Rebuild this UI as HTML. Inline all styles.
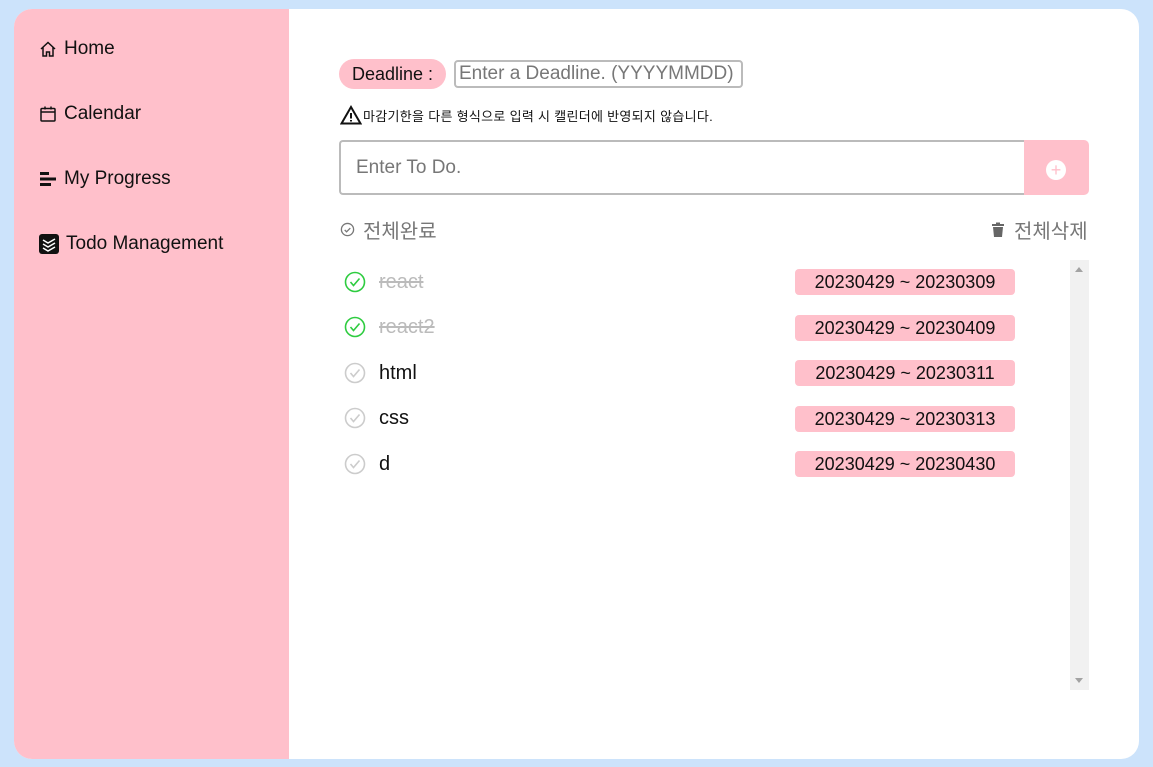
<!DOCTYPE html>
<html><head><meta charset="utf-8"><style>
*{margin:0;padding:0;box-sizing:border-box}
body{width:1153px;height:767px;background:#cce3fb;font-family:"Liberation Sans","Noto Sans CJK KR",sans-serif;position:relative;overflow:hidden}
.card{position:absolute;left:14px;top:9px;width:1125px;height:750px;background:#fff;border-radius:18px;overflow:hidden}
.side{position:absolute;left:0;top:0;width:275px;height:750px;background:#ffc0cb}
.nav{position:absolute;left:25px;font-size:19px;color:#111;display:flex;align-items:center;gap:7px}
.abs{position:absolute}
.row{position:absolute;left:344px;height:30px;display:flex;align-items:center}
.row .t{font-size:20px;margin-left:13px}
.date{position:absolute;left:781px;width:220px;height:26px;background:#ffc0cb;border-radius:4px;font-size:18px;text-align:center;line-height:26px;color:#111}
</style></head><body>
<div class="card">
<div class="side">
<div class="nav" style="top:29px"><svg width="18" height="18" viewBox="0 0 18 18" fill="none" stroke="#111" stroke-width="1.5"><path d="M2 9L9 2.5 16 9M4 7.5V16h3.5v-4h3v4H14V7.5"/></svg>Home</div>
<div class="nav" style="top:94px"><svg width="18" height="18" viewBox="0 0 18 18" fill="none" stroke="#111" stroke-width="1.5"><rect x="2" y="3.5" width="14" height="12.5" rx="1"/><path d="M2 7h14M6 1.5v3M12 1.5v3"/></svg>Calendar</div>
<div class="nav" style="top:159px"><svg width="18" height="18" viewBox="0 0 18 18" fill="#111"><rect x="1" y="2" width="9" height="3"/><rect x="1" y="7.5" width="16" height="3"/><rect x="1" y="13" width="11" height="3"/></svg>My Progress</div>
<div class="nav" style="top:224px"><svg width="20" height="20" viewBox="0 0 20 20"><rect x="0" y="0" width="20" height="20" rx="3" fill="#111"/><path d="M4 6l5 3 7-4M4 10l5 3 7-4M4 14l5 3 7-4" stroke="#fff" stroke-width="1.5" fill="none"/></svg>Todo Management</div>
</div>
<div class="abs" style="left:325px;top:50px;width:107px;height:30px;background:#ffc0cb;border-radius:15px;font-size:18px;line-height:30px;text-align:center;color:#111">Deadline :</div>
<div class="abs" style="left:440px;top:51px;width:289px;height:28px;border:2px solid #bbb;border-radius:4px;font-size:19px;color:#777;line-height:24px;padding-left:3px">Enter a Deadline. (YYYYMMDD)</div>
<div class="abs" style="left:326px;top:96px;font-size:13px;color:#111;display:flex;align-items:center;gap:1px;letter-spacing:0.3px"><svg width="22" height="20" viewBox="0 0 22 20"><path d="M11 2L1.5 18.5h19z" fill="none" stroke="#111" stroke-width="2"/><path d="M11 8v5.5M11 15v1.5" stroke="#111" stroke-width="2"/></svg>마감기한을 다른 형식으로 입력 시 캘린더에 반영되지 않습니다.</div>
<div class="abs" style="left:325px;top:131px;width:686px;height:55px;border:2px solid #bbb;border-right:none;border-radius:4px 0 0 4px;font-size:19px;color:#777;line-height:51px;padding-left:15px">Enter To Do.</div>
<div class="abs" style="left:1010px;top:131px;width:65px;height:55px;background:#ffc0cb;border-radius:0 5px 5px 0"><div style="position:absolute;left:22px;top:20px;width:20px;height:20px;border-radius:50%;background:#fff;color:#ffc0cb;font-size:18px;line-height:20px;text-align:center">+</div></div>
<div class="abs" style="left:326px;top:206px;font-size:20px;color:#777;display:flex;align-items:center;gap:8px"><svg width="15" height="15" viewBox="0 0 16 16" fill="none" stroke="#777" stroke-width="1.4"><circle cx="8" cy="8" r="6.5"/><path d="M5 8.5l2 2 4-4"/></svg>전체완료</div>
<div class="abs" style="left:977px;top:206px;font-size:20px;color:#777;display:flex;align-items:center;gap:9px"><svg width="14" height="16" viewBox="0 0 14 16" fill="#666"><rect x="1" y="2" width="12" height="2"/><rect x="5" y="0.5" width="4" height="2"/><path d="M2 5h10l-1 10H3z"/></svg>전체삭제</div>
<div class="abs" style="left:1056px;top:251px;width:19px;height:430px;background:#f1f1f1"><div style="position:absolute;left:5px;top:7px;border:4px solid transparent;border-bottom:5px solid #a3a3a3;border-top:0"></div><div style="position:absolute;left:5px;bottom:7px;border:4px solid transparent;border-top:5px solid #a3a3a3;border-bottom:0"></div></div>
</div>
<div class="row" style="top:267px"><svg width="22" height="22" viewBox="0 0 22 22" fill="none" stroke="#2ecc40" stroke-width="1.6"><circle cx="11" cy="11" r="9.5"/><path d="M6.5 11l3 3.5 6-7"/></svg><span class="t" style="color:#bbb;text-decoration:line-through">react</span></div>
<div class="row" style="top:312px"><svg width="22" height="22" viewBox="0 0 22 22" fill="none" stroke="#2ecc40" stroke-width="1.6"><circle cx="11" cy="11" r="9.5"/><path d="M6.5 11l3 3.5 6-7"/></svg><span class="t" style="color:#bbb;text-decoration:line-through">react2</span></div>
<div class="row" style="top:358px"><svg width="22" height="22" viewBox="0 0 22 22" fill="none" stroke="#ccc" stroke-width="1.6"><circle cx="11" cy="11" r="9.5"/><path d="M6.5 11l3 3.5 6-7"/></svg><span class="t" style="color:#111">html</span></div>
<div class="row" style="top:403px"><svg width="22" height="22" viewBox="0 0 22 22" fill="none" stroke="#ccc" stroke-width="1.6"><circle cx="11" cy="11" r="9.5"/><path d="M6.5 11l3 3.5 6-7"/></svg><span class="t" style="color:#111">css</span></div>
<div class="row" style="top:449px"><svg width="22" height="22" viewBox="0 0 22 22" fill="none" stroke="#ccc" stroke-width="1.6"><circle cx="11" cy="11" r="9.5"/><path d="M6.5 11l3 3.5 6-7"/></svg><span class="t" style="color:#111">d</span></div>
<div class="date" style="left:795px;top:269px">20230429 ~ 20230309</div>
<div class="date" style="left:795px;top:315px">20230429 ~ 20230409</div>
<div class="date" style="left:795px;top:360px">20230429 ~ 20230311</div>
<div class="date" style="left:795px;top:406px">20230429 ~ 20230313</div>
<div class="date" style="left:795px;top:451px">20230429 ~ 20230430</div>
</body></html>
